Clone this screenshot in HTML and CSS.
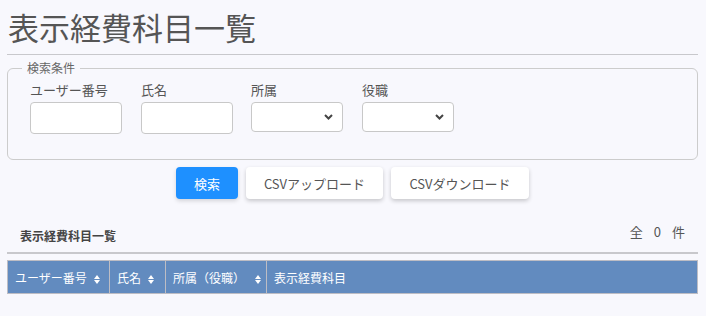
FILE: index.html
```html
<!DOCTYPE html>
<html lang="ja">
<head>
    <meta charset="UTF-8">
    <meta name="viewport" content="width=device-width, initial-scale=1.0">
    <title>表示経費科目一覧</title>
    <link rel="stylesheet" href="styles.css">
</head>
<body>
    <div class="page">
        <h1 class="page-title">表示経費科目一覧</h1>

        <form id="searchForm">
            <fieldset class="search-box">
                <legend>検索条件</legend>
                <div class="search-fields">
                    <div class="field">
                        <label for="userNo">ユーザー番号</label>
                        <input type="text" id="userNo" name="userNo">
                    </div>
                    <div class="field">
                        <label for="userName">氏名</label>
                        <input type="text" id="userName" name="userName">
                    </div>
                    <div class="field field-select">
                        <label for="dept">所属</label>
                        <div class="select-wrap">
                            <select id="dept" name="dept">
                                <option value=""></option>
                            </select>
                            <svg class="chevron" width="9" height="6" viewBox="0 0 9 6"><path d="M1 1l3.5 3.5L8 1" fill="none" stroke="#444" stroke-width="2"/></svg>
                        </div>
                    </div>
                    <div class="field">
                        <label for="post">役職</label>
                        <div class="select-wrap">
                            <select id="post" name="post">
                                <option value=""></option>
                            </select>
                            <svg class="chevron" width="9" height="6" viewBox="0 0 9 6"><path d="M1 1l3.5 3.5L8 1" fill="none" stroke="#444" stroke-width="2"/></svg>
                        </div>
                    </div>
                </div>
            </fieldset>

            <div class="actions">
                <button type="submit" class="btn btn-primary">検索</button>
                <button type="button" class="btn btn-upload">CSVアップロード</button>
                <button type="button" class="btn btn-download">CSVダウンロード</button>
            </div>
        </form>

        <div class="list-head">
            <h2>表示経費科目一覧</h2>
            <span class="count">全<span class="num">0</span>件</span>
        </div>

        <table class="list-table">
            <thead>
                <tr>
                    <th class="col-no">ユーザー番号<span class="sort"></span></th>
                    <th class="col-name">氏名<span class="sort"></span></th>
                    <th class="col-dept">所属（役職）<span class="sort"></span></th>
                    <th>表示経費科目</th>
                </tr>
            </thead>
            <tbody></tbody>
        </table>
    </div>
</body>
</html>
```

FILE: styles.css
```css
body {
    margin: 0;
    background-color: #f8f8fd;
    font-family: "Noto Sans CJK JP", "Noto Sans", sans-serif;
    color: #555;
}

.page {
    padding: 0 8px 0 7px;
}

.page-title {
    margin: 0;
    padding: 7px 0 0 1px;
    height: 47px;
    font-size: 31px;
    font-weight: normal;
    line-height: 40px;
    color: #555;
    border-bottom: 1px solid #c8c8cc;
}

.search-box {
    margin: 6px 0 0;
    padding: 0 22px 25px;
    border: 1px solid #ccc;
    border-radius: 6px;
}

.search-box legend {
    margin-left: -8px;
    padding: 0 5px;
    font-size: 12px;
    line-height: 14px;
    color: #666;
}

.search-fields {
    display: flex;
    gap: 19px;
    padding-top: 7px;
}

.field-select {
    margin-left: -1px;
}

.field label {
    display: block;
    font-size: 13px;
    line-height: 16px;
    margin-bottom: 4px;
    color: #555;
}

.field input {
    display: block;
    box-sizing: border-box;
    width: 92px;
    height: 32px;
    border: 1px solid #c8c8c8;
    border-radius: 4px;
    background: #fff;
}

.select-wrap {
    position: relative;
    width: 92px;
}

.select-wrap select {
    display: block;
    box-sizing: border-box;
    width: 92px;
    height: 30px;
    border: 1px solid #c8c8c8;
    border-radius: 4px;
    background: #fff;
    appearance: none;
}

.chevron {
    position: absolute;
    right: 10px;
    top: 12px;
}

.actions {
    display: flex;
    justify-content: center;
    gap: 8px;
    margin-top: 7px;
}

.btn {
    height: 32px;
    border: none;
    border-radius: 4px;
    font-family: inherit;
    font-size: 13px;
    cursor: pointer;
}

.btn-primary {
    width: 62px;
    background-color: #1e90ff;
    color: #fff;
    box-shadow: 0 2px 4px rgba(0,0,0,0.15);
}

.btn-upload,
.btn-download {
    background-color: #fff;
    color: #555;
    box-shadow: 0 2px 4px rgba(0,0,0,0.2);
}

.btn-upload {
    width: 137px;
}

.btn-download {
    width: 138px;
}

.list-head {
    display: flex;
    justify-content: space-between;
    align-items: flex-end;
    margin-top: 22px;
    padding: 0 13px 0 13px;
    height: 31px;
    border-bottom: 2px solid #c8c8cc;
}

.list-head h2 {
    margin: 0 0 8px;
    font-size: 12px;
    font-weight: bold;
    color: #444;
}

.count {
    margin-bottom: 11px;
    font-size: 13px;
    color: #555;
}

.count .num {
    margin: 0 11px;
}

.list-table {
    margin-top: 6px;
    width: 100%;
    border-collapse: collapse;
}

.list-table th {
    height: 32px;
    padding: 0 0 0 7px;
    background-color: #628bbf;
    border: 1px solid #bdbdc4;
    color: #fff;
    font-size: 12px;
    font-weight: normal;
    text-align: left;
    white-space: nowrap;
}

.list-table .col-no {
    width: 94px;
}

.list-table .col-name {
    width: 48px;
}

.list-table .col-dept {
    width: 93px;
}

.sort {
    display: inline-block;
    position: relative;
    width: 7px;
    height: 9px;
    margin-left: 7px;
    vertical-align: -1px;
}

.sort::before,
.sort::after {
    content: "";
    position: absolute;
    left: 0;
    border-left: 3.5px solid transparent;
    border-right: 3.5px solid transparent;
}

.sort::before {
    top: 0;
    border-bottom: 4px solid #fff;
}

.sort::after {
    bottom: 0;
    border-top: 4px solid #fff;
}

.col-dept .sort {
    margin-left: 10px;
}
```
